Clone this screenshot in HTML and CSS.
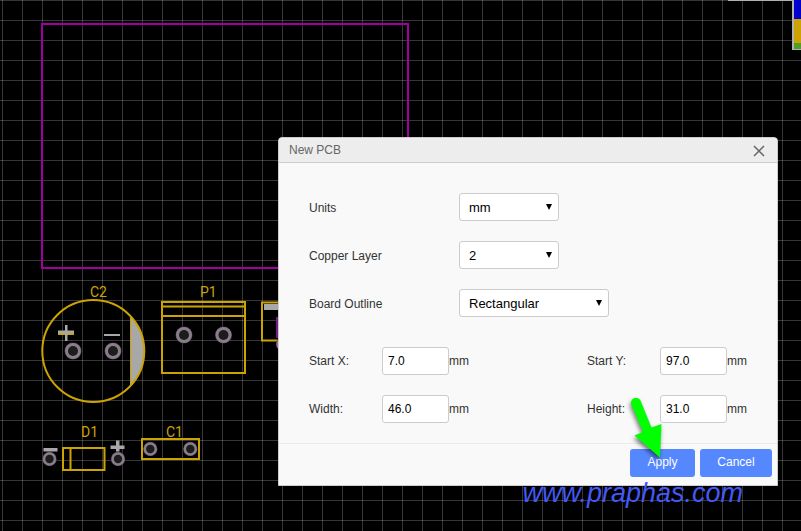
FILE: index.html
```html
<!DOCTYPE html>
<html lang="en">
<head>
    <meta charset="UTF-8">
    <title>New PCB</title>
    <link rel="stylesheet" href="styles.css">
</head>
<body>
    <div class="editor">
        <svg class="board" aria-hidden="true">
            <defs>
                <g id="pad">
                    <circle class="pad-mask" r="8.5"/>
                    <circle class="pad-ring" r="8"/>
                    <circle class="pad-hole" r="5"/>
                </g>
                <g id="pad-small">
                    <circle class="pad-mask" r="7.2"/>
                    <circle class="pad-ring" r="6.7"/>
                    <circle class="pad-hole" r="4.2"/>
                </g>
            </defs>

            <rect class="outline" x="42" y="24" width="366" height="244"/>

            <!-- C2 -->
            <path class="silk-fill" d="M130.5 316A51 51 0 0 1 130.5 386Z"/>
            <path class="thin" d="M130.5 316V386"/>
            <circle class="silk" cx="93.3" cy="351" r="51"/>
            <path class="silk" d="M58 334H74"/>
            <path class="silk-fill" d="M65 325h2.5v16h-2.5zM58 330.5h16v3h-16zM104 334h16v2h-16z"/>
            <use href="#pad" x="73" y="351"/>
            <use href="#pad" x="113" y="351"/>
            <text class="ref" x="90" y="297">C2</text>

            <!-- P1 -->
            <path class="silk" d="M162 302H245V373H162ZM162 306.5H245M162 316H245"/>
            <use href="#pad" x="184" y="335"/>
            <use href="#pad" x="223.5" y="335"/>
            <text class="ref" x="200" y="297">P1</text>

            <!-- U1 -->
            <path class="silk" d="M262 302.5H300V340.5H262Z"/>
            <path class="silk-fill" d="M264 304h30v6h-30z"/>
            <path class="courtyard" d="M277 317V338"/>
            <use href="#pad-small" x="283" y="344"/>

            <!-- D1 -->
            <path class="silk" d="M63 448H104.5V470H63ZM70.5 448V470"/>
            <use href="#pad-small" x="49.5" y="459"/>
            <use href="#pad-small" x="118" y="459"/>
            <path class="silk-fill" d="M43.5 448h14v3.5h-14zM116 440.5h3.5v11h-3.5zM110.5 445.5h14v3.5h-14z"/>
            <text class="ref" x="81" y="437">D1</text>

            <!-- C1 -->
            <path class="silk" d="M142 439H199V459H142Z"/>
            <use href="#pad-small" x="150.3" y="449"/>
            <use href="#pad-small" x="190.3" y="449"/>
            <text class="ref" x="166" y="437">C1</text>
        </svg>

        <div class="layers">
            <div class="layers-title"></div>
            <div class="layers-list">
                <div class="layer layer-bottom"></div>
                <div class="layer layer-silk"></div>
                <div class="layer layer-paste"></div>
            </div>
        </div>

        <form class="dialog">
            <div class="dialog-header">
                <span>New PCB</span>
                <button type="button" class="close" aria-label="Close">
                    <svg width="12" height="12" viewBox="0 0 12 12"><path d="M1 1L11 11M11 1L1 11"/></svg>
                </button>
            </div>

            <div class="dialog-body">
                <div class="row">
                    <label class="wide-label" for="units">Units</label>
                    <div class="select">
                        <select id="units"><option>mm</option><option>inch</option><option>mil</option></select>
                    </div>
                </div>
                <div class="row">
                    <label class="wide-label" for="copper">Copper Layer</label>
                    <div class="select">
                        <select id="copper"><option>2</option><option>4</option><option>6</option></select>
                    </div>
                </div>
                <div class="row">
                    <label class="wide-label" for="shape">Board Outline</label>
                    <div class="select select-wide">
                        <select id="shape"><option>Rectangular</option><option>Circular</option></select>
                    </div>
                </div>

                <div class="sizes">
                    <div class="row pair">
                        <div class="size"><label for="startX">Start X:</label><input type="text" id="startX" value="7.0"><span>mm</span></div>
                        <div class="size"><label for="startY">Start Y:</label><input type="text" id="startY" value="97.0"><span>mm</span></div>
                    </div>
                    <div class="row pair">
                        <div class="size"><label for="width">Width:</label><input type="text" id="width" value="46.0"><span>mm</span></div>
                        <div class="size"><label for="height">Height:</label><input type="text" id="height" value="31.0"><span>mm</span></div>
                    </div>
                </div>
            </div>

            <div class="dialog-footer">
                <button type="button" class="btn">Apply</button>
                <button type="button" class="btn btn-cancel">Cancel</button>
            </div>
        </form>

        <svg class="pointer" width="32" height="62" viewBox="0 0 32 62" aria-hidden="true">
            <path d="M1.5 8A5 5 0 0 1 10.5 3.500L21.500 30.500L31.500 27L30 60.500L4.500 38.500L13 35Z"/>
        </svg>
        <div class="watermark">www.praphas.com</div>
    </div>
</body>
</html>
```

FILE: styles.css
```css
* {
    box-sizing: border-box;
}
body {
    margin: 0;
    background: #000;
    color: #333;
    font: 12px/16px "Liberation Sans", Arial, sans-serif;
}

/* drawing area with 20px grid */
.editor {
    position: relative;
    min-height: 100vh;
    overflow: hidden;
    background-color: #000;
    background-image:
        linear-gradient(rgba(255, 255, 255, 0.21) 1px, transparent 1px),
        linear-gradient(90deg, rgba(255, 255, 255, 0.21) 1px, transparent 1px);
    background-size: 20px 20px;
    background-position: 0 0, 2px 0;
}
.board {
    position: absolute;
    top: 0;
    left: 0;
    width: 100%;
    height: 100%;
}
.outline {
    fill: none;
    stroke: #a000a0;
    stroke-width: 2;
}
.silk {
    fill: none;
    stroke: #cca300;
    stroke-width: 2;
}
.thin {
    stroke: #cca300;
    stroke-width: 1;
}
.silk-fill {
    fill: #a8a8a8;
}
.courtyard {
    stroke: #702080;
    stroke-width: 2;
}
.pad-mask {
    fill: #5c2468;
}
.pad-ring {
    fill: #848084;
}
.pad-hole {
    fill: #1c1c1c;
}
.ref {
    fill: #cca300;
    font: 14px Roboto, sans-serif;
}

/* layer palette in the corner */
.layers {
    position: absolute;
    top: 0;
    right: 0;
    display: flex;
}
.layers-title {
    width: 64px;
    height: 1px;
    background: #b0b0b0;
}
.layers-list {
    width: 9px;
    border-left: 2px solid #b0b0b0;
    border-bottom: 1px solid #b0b0b0;
}
.layer-bottom {
    height: 19px;
    background: #0000cc;
}
.layer-silk {
    height: 24px;
    background: #cca300;
}
.layer-paste {
    height: 6px;
    background: #50a028;
}

/* dialog */
.dialog {
    position: absolute;
    top: 137px;
    right: 23px;
    width: 500px;
    background: #f9f9f9;
    border: 1px solid #ccc;
    border-radius: 4px 4px 0 0;
}
.dialog-header {
    display: flex;
    justify-content: space-between;
    align-items: center;
    height: 25px;
    padding: 0 12px 0 10px;
    background: #ededed;
    border-bottom: 1px solid #ccc;
    border-radius: 3px 3px 0 0;
    color: #666;
}
.close {
    display: flex;
    padding: 2px 0 0;
    border: 0;
    background: none;
}
.close path {
    stroke: #666;
    stroke-width: 1.5;
}
.dialog-body {
    padding: 30px 30px 20px;
}
.row {
    display: flex;
    align-items: center;
    margin-bottom: 20px;
}
.wide-label {
    width: 150px;
    padding-top: 2px;
}
.select {
    position: relative;
    width: 100px;
}
.select-wide {
    width: 150px;
}
.select::after {
    content: "";
    position: absolute;
    top: 11px;
    right: 7px;
    width: 6px;
    height: 6px;
    background: #000;
    clip-path: polygon(0 0, 100% 0, 50% 100%);
    pointer-events: none;
}
select {
    appearance: none;
    display: block;
    width: 100%;
    height: 28px;
    padding: 0 20px 0 9px;
    border: 1px solid #ccc;
    border-radius: 3px;
    background: #fff;
    color: #000;
    font: 13px "Liberation Sans", Arial, sans-serif;
}
.sizes {
    margin-top: 30px;
}
.pair {
    justify-content: space-between;
}
.pair:last-child {
    margin-bottom: 0;
}
.size {
    display: flex;
    align-items: center;
}
.size label {
    width: 73px;
}
input {
    width: 67px;
    height: 28px;
    padding: 0 5px;
    border: 1px solid #ccc;
    border-radius: 3px;
    background: #fff;
    color: #000;
    font: 12px "Liberation Sans", Arial, sans-serif;
}
.dialog-footer {
    display: flex;
    justify-content: flex-end;
    gap: 5px;
    padding: 5px 5px 8px;
    border-top: 1px solid #eaeaea;
}
.btn {
    width: 65px;
    height: 28px;
    padding: 0 0 2px;
    border: 0;
    border-radius: 3px;
    background: #5588ff;
    color: #fff;
    font: 12px "Liberation Sans", Arial, sans-serif;
}
.btn-cancel {
    width: 72px;
}

.pointer {
    position: absolute;
    top: 397px;
    right: 139px;
    overflow: visible;
    fill: #00ff00;
    filter: drop-shadow(-1px 3px 2px rgba(0, 0, 0, 0.5));
    pointer-events: none;
}
.watermark {
    position: absolute;
    top: 477px;
    right: 58px;
    color: #4259f5;
    font: italic 27px/32px "Liberation Sans", Arial, sans-serif;
}
```
